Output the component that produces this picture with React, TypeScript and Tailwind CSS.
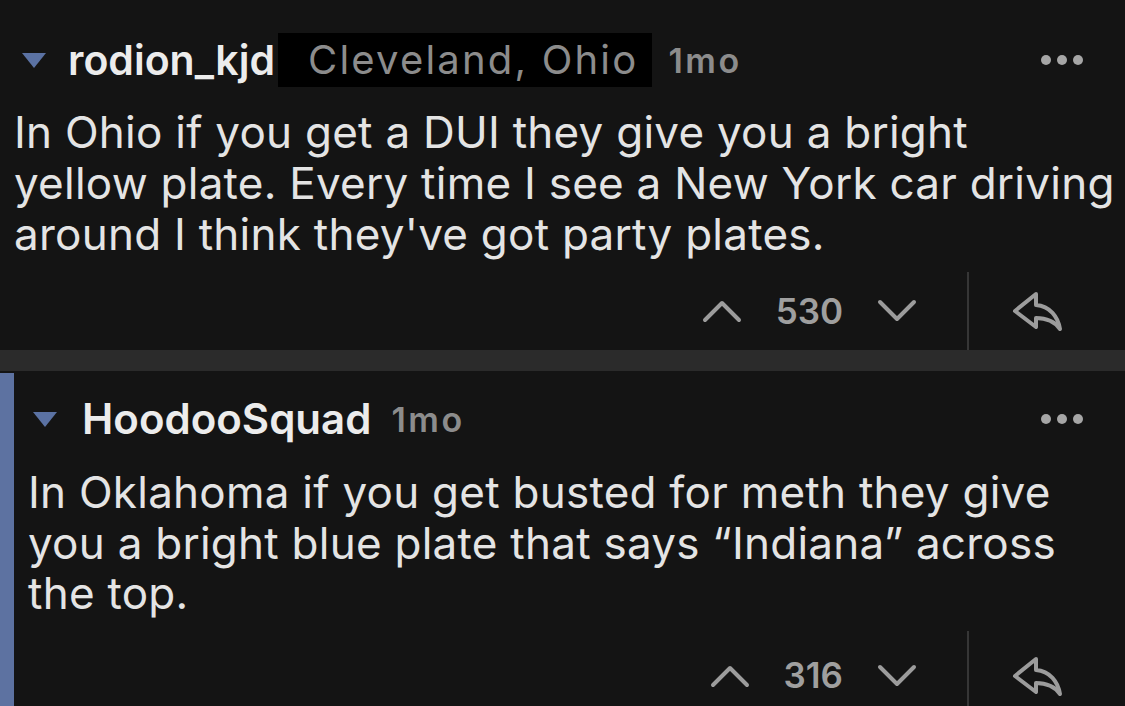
import React from 'react'

const font = { fontFamily: 'Inter, "Noto Sans", sans-serif' }

function Caret() {
  return (
    <svg width="24" height="15" viewBox="0 0 24 15" className="shrink-0">
      <polygon points="0,0 24,0 12,15" fill="#5b72a3" />
    </svg>
  )
}

function Dots() {
  return (
    <div className="flex items-center gap-[6px]">
      <span className="block w-[10px] h-[10px] rounded-full bg-[#a6a6a6]" />
      <span className="block w-[10px] h-[10px] rounded-full bg-[#a6a6a6]" />
      <span className="block w-[10px] h-[10px] rounded-full bg-[#a6a6a6]" />
    </div>
  )
}

function Chevron({ down }: { down?: boolean }) {
  return (
    <svg width="40" height="24" viewBox="0 0 40 24" fill="none" stroke="#9c9c9c" strokeWidth="4" strokeLinecap="round" strokeLinejoin="round">
      {down ? <polyline points="3,3 20,20 37,3" /> : <polyline points="3,21 20,4 37,21" />}
    </svg>
  )
}

function ReplyIcon() {
  return (
    <svg width="52" height="42" viewBox="0 0 52 42" fill="none" stroke="#9c9c9c" strokeWidth="4" strokeLinejoin="round" strokeLinecap="round">
      <path d="M24 4 L3 21 L24 37 L24 28 C35 28 43 32 48 39 C46 27 38 16 24 15 Z" />
    </svg>
  )
}

function VoteRow({ score, height }: { score: string; height: string }) {
  return (
    <div className={`flex items-stretch justify-end mt-[12px] ${height}`}>
      <div className="flex items-center gap-[34px] mr-[50px]">
        <Chevron />
        <span className="text-[35px] font-semibold text-[#9f9f9f] leading-none">{score}</span>
        <Chevron down />
      </div>
      <div className="w-[2px] bg-[#363636]" />
      <div className="w-[156px] flex items-center pl-[43px]">
        <ReplyIcon />
      </div>
    </div>
  )
}

export default function App() {
  return (
    <div className="w-[1125px] h-[706px] overflow-hidden bg-[#141414]" style={font}>
      {/* First comment */}
      <div className="pl-[14px]">
        <div className="mt-[33px] h-[54px] flex items-center pr-[42px]">
          <div className="pl-[8px]">
            <Caret />
          </div>
          <span className="ml-[22px] text-[41px] font-semibold text-[#ececec] tracking-[0px] leading-none">rodion_kjd</span>
          <span className="ml-[3px] h-[54px] flex items-center bg-black pl-[30px] pr-[14px] text-[40px] text-[#8c8c8c] tracking-[2.2px]">
            Cleveland, Ohio
          </span>
          <span className="ml-[16px] text-[34px] font-semibold text-[#8c8c8c] tracking-[2.5px]">1mo</span>
          <div className="ml-auto">
            <Dots />
          </div>
        </div>
        <p className="mt-[20px] text-[44px] leading-[51px] text-[#e4e4e4] tracking-[0.25px] whitespace-nowrap">
          In Ohio if you get a DUI they give you a bright
          <br />
          yellow plate. Every time I see a New York car driving
          <br />
          around I think they've got party plates.
        </p>
        <VoteRow score="530" height="h-[78px]" />
      </div>

      <div className="h-[21px] bg-[#2b2b2b]" />

      {/* Second comment */}
      <div className="mt-[2px] flex h-[400px]">
        <div className="w-[14px] bg-[#5d72a1]" />
        <div className="flex-1 pl-[14px]">
          <div className="mt-[19px] h-[54px] flex items-center pr-[42px]">
            <div className="pl-[5px]">
              <Caret />
            </div>
            <span className="ml-[25px] text-[42px] font-semibold text-[#ececec] tracking-[0px] leading-none">HoodooSquad</span>
            <span className="ml-[20px] text-[34px] font-semibold text-[#8c8c8c] tracking-[2.5px]">1mo</span>
            <div className="ml-auto">
              <Dots />
            </div>
          </div>
          <p className="mt-[21px] text-[44px] leading-[50.5px] text-[#e4e4e4] tracking-[0.25px] whitespace-nowrap">
            In Oklahoma if you get busted for meth they give
            <br />
            you a bright blue plate that says “Indiana” across
            <br />
            the top.
          </p>
          <VoteRow score="316" height="h-[90px]" />
        </div>
      </div>
    </div>
  )
}
